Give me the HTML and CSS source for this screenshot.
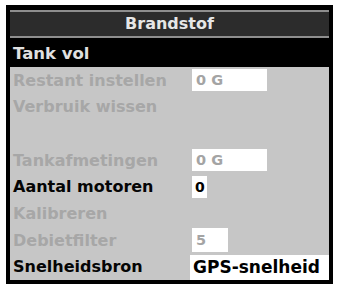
FILE: index.html
```html
<!DOCTYPE html>
<html>
<head>
<meta charset="utf-8">
<link rel="stylesheet" href="styles.css">
</head>
<body>
<div class="frame">
  <div class="header">Brandstof</div>
  <div class="row row-selected"><span class="label">Tank vol</span></div>
  <div class="list">
    <div class="row"><span class="label dim">Restant instellen</span><span class="value dim wide">0 G</span></div>
    <div class="row"><span class="label dim">Verbruik wissen</span></div>
    <div class="row"></div>
    <div class="row"><span class="label dim">Tankafmetingen</span><span class="value dim wide">0 G</span></div>
    <div class="row"><span class="label">Aantal motoren</span><span class="value narrow">0</span></div>
    <div class="row"><span class="label dim">Kalibreren</span></div>
    <div class="row"><span class="label dim">Debietfilter</span><span class="value dim small">5</span></div>
    <div class="row"><span class="label">Snelheidsbron</span><span class="value full">GPS-snelheid</span></div>
  </div>
</div>
</body>
</html>
```
FILE: styles.css
```css
html, body {
  margin: 0;
  padding: 0;
  background: #ffffff;
}
body {
  padding: 5px 0 0 6px;
  font-family: "DejaVu Sans", Verdana, sans-serif;
  font-weight: bold;
  font-size: 16px;
}
.frame {
  width: 319px;
  height: 271px;
  border: 4px solid #000;
  background: #000;
  display: flex;
  flex-direction: column;
}
.header {
  margin-top: 1px;
  height: 24px;
  border-top: 2px solid #8e8e8e;
  border-bottom: 2px solid #8e8e8e;
  background: #2c2c2c;
  color: #e6e6e6;
  text-align: center;
  line-height: 24px;
  font-size: 16px;
}
.row-selected {
  margin-top: 1px;
  height: 28px;
  display: flex;
  align-items: center;
}
.list {
  flex: 1;
  background: #c6c6c6;
  display: grid;
  grid-template-rows: repeat(8, 1fr);
}
.row {
  display: flex;
  align-items: center;
}
.label {
  width: 179px;
  padding-left: 3px;
  color: #050505;
  white-space: nowrap;
}
.row-selected .label {
  color: #e0e0e0;
  font-size: 16.5px;
}
.dim {
  color: #a7a7a7;
}
.value {
  background: #ffffff;
  height: 22px;
  line-height: 22px;
  padding-left: 4px;
  box-sizing: border-box;
  color: #000;
  white-space: nowrap;
}
.value.dim {
  color: #a4a4a4;
  font-size: 14.5px;
}
.wide {
  width: 75px;
}
.narrow {
  width: 15px;
  padding-left: 3px;
  font-size: 14px;
}
.small {
  width: 36px;
  height: 24px;
  line-height: 24px;
}
.full {
  flex: 1;
  align-self: flex-end;
  height: 25px;
  line-height: 25px;
  margin-left: -2px;
  font-size: 17px;
  padding-left: 3px;
}
```
